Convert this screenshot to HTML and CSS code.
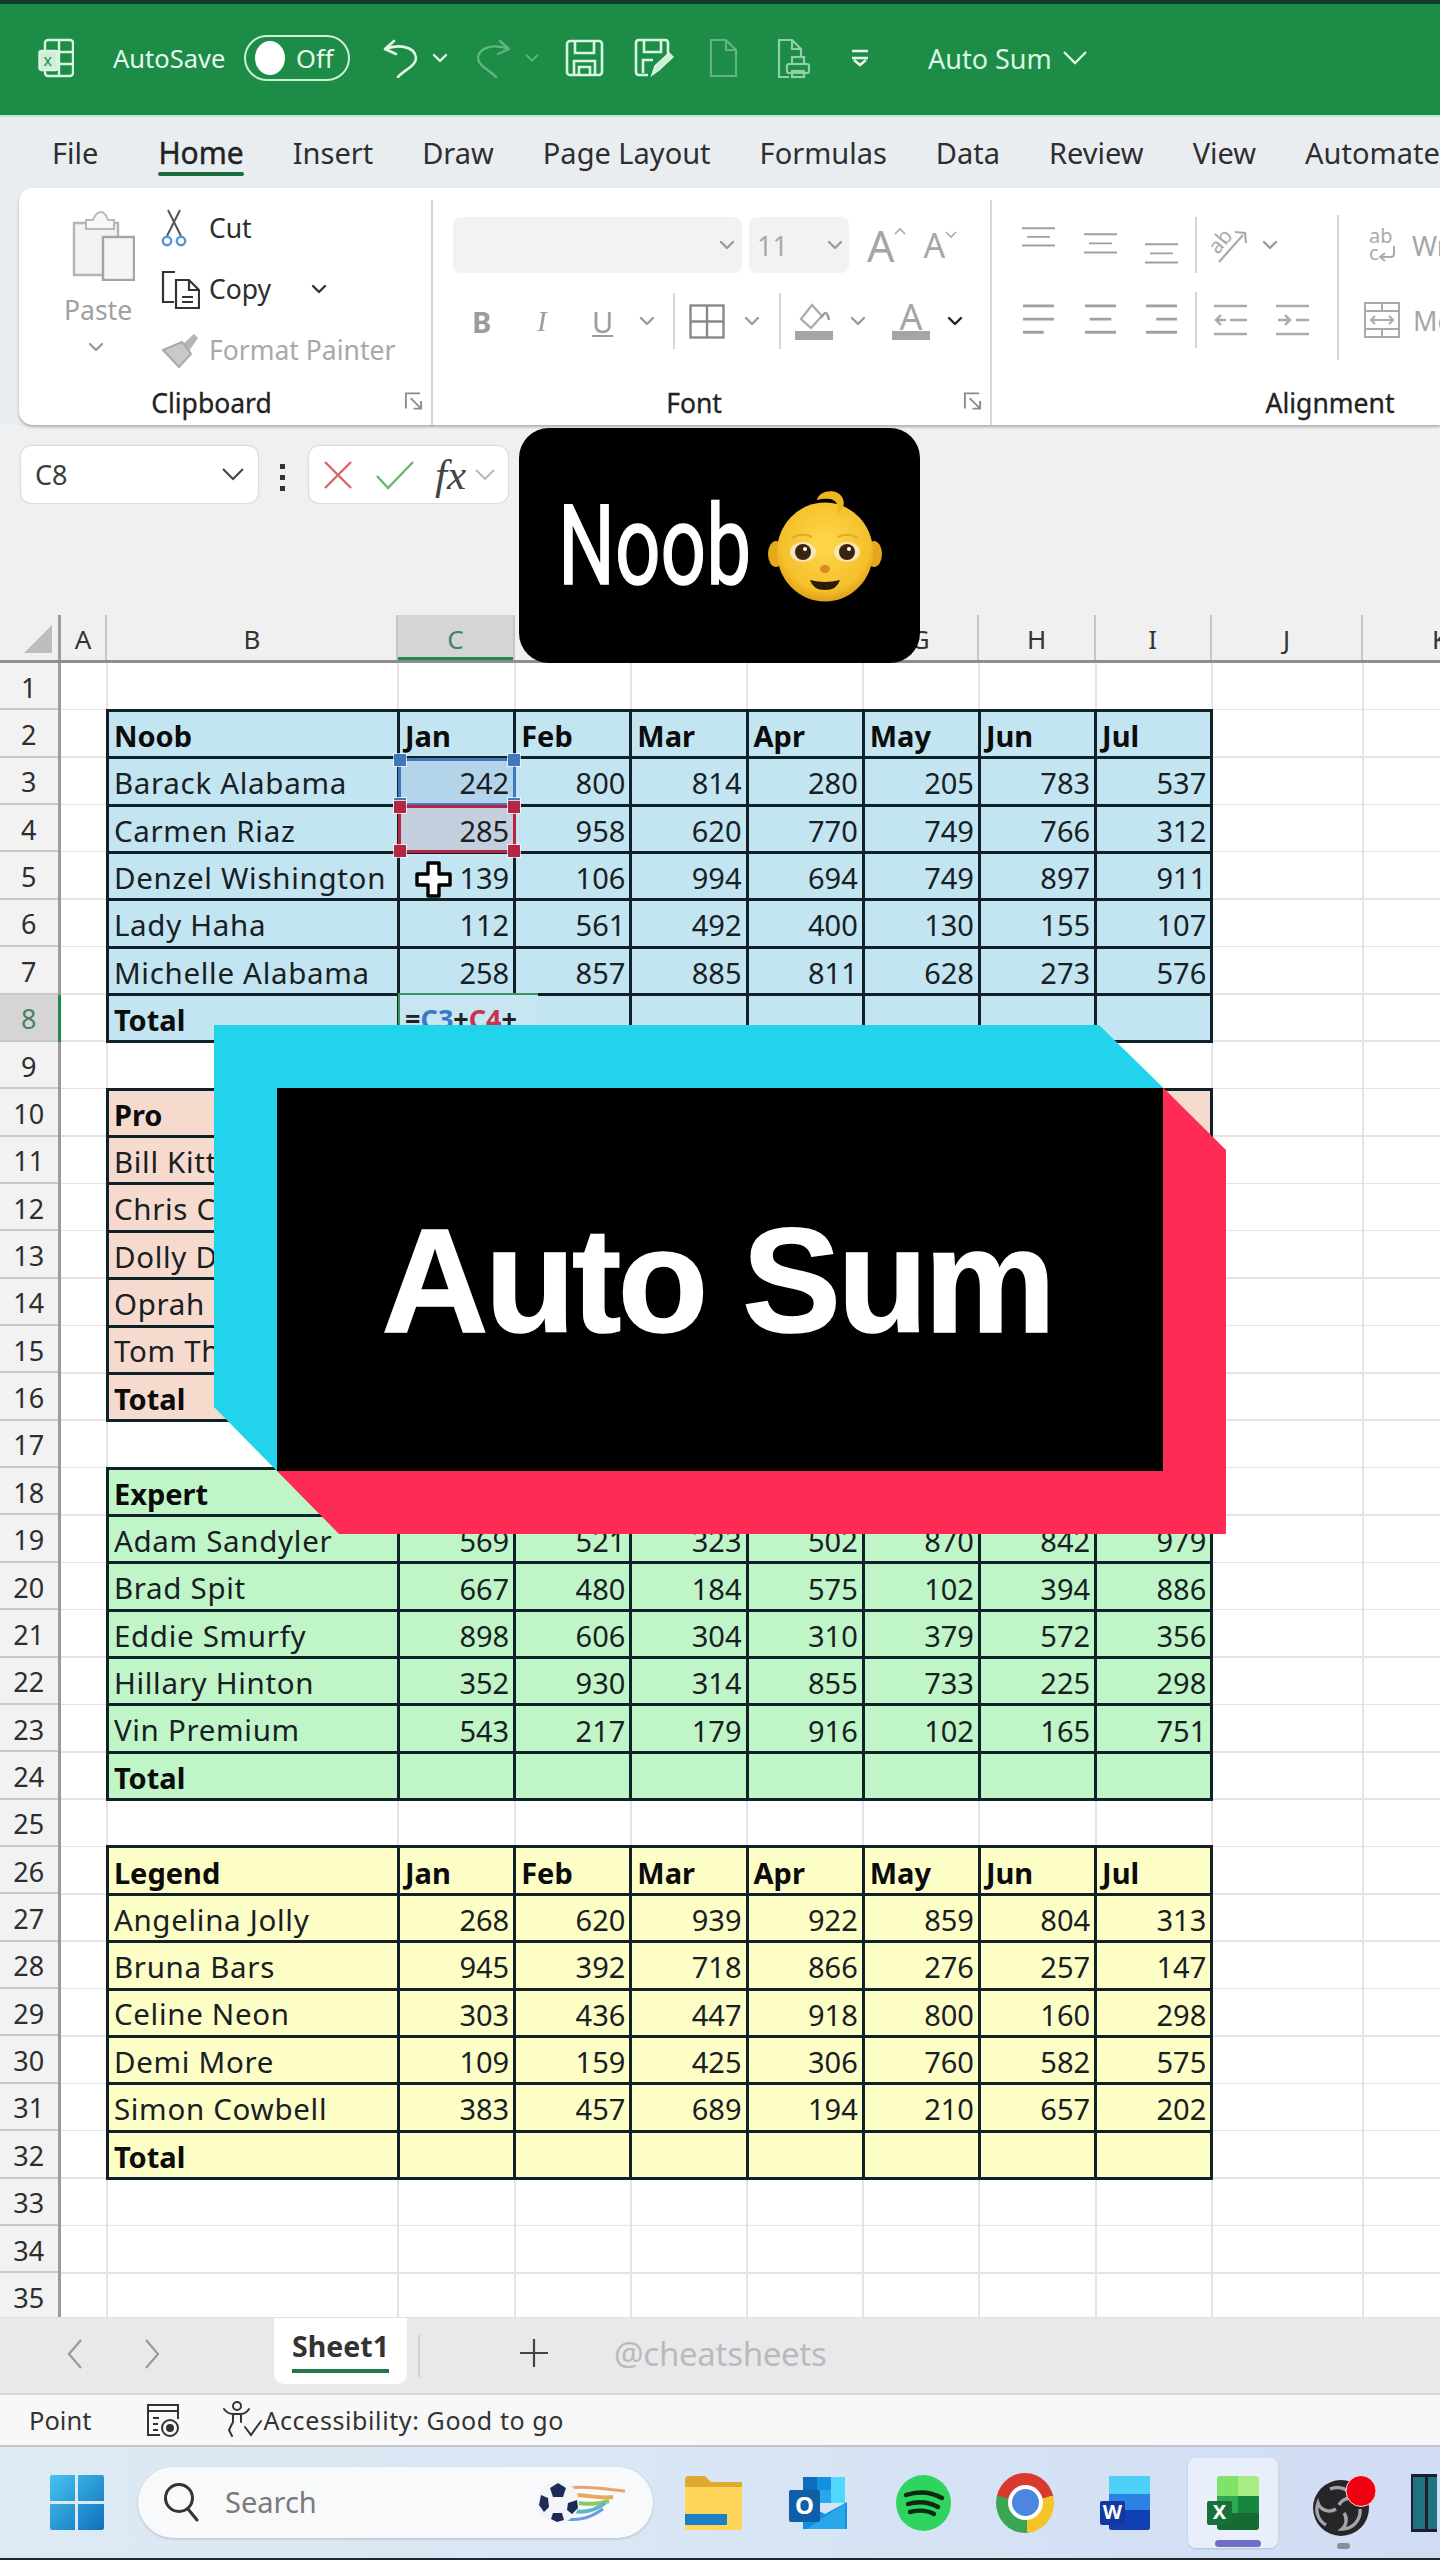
FILE: index.html
```html
<!DOCTYPE html>
<html lang="en">
<head>
<meta charset="utf-8">
<title>Auto Sum - Excel</title>
<link rel="stylesheet" href="styles.css">
</head>
<body>
<svg class="defs" aria-hidden="true">
  <symbol id="chev" viewBox="0 0 16 10"><path d="M2 2 8 8 14 2" fill="none" stroke="currentColor" stroke-width="2.4" stroke-linecap="round" stroke-linejoin="round"/></symbol>
  <symbol id="launch" viewBox="0 0 20 20"><path d="M2 18V2h15M7 7l11 11M18 10v8h-8" fill="none" stroke="currentColor" stroke-width="2"/></symbol>
  <symbol id="aLeft" viewBox="0 0 33 34"><path d="M0 2h33M0 16h33M0 30h22" fill="none" stroke="currentColor" stroke-width="3"/></symbol>
  <symbol id="aCenter" viewBox="0 0 33 34"><path d="M0 2h33M5 16h23M0 30h33" fill="none" stroke="currentColor" stroke-width="3"/></symbol>
  <symbol id="aRight" viewBox="0 0 33 34"><path d="M0 2h33M11 16h22M0 30h33" fill="none" stroke="currentColor" stroke-width="3"/></symbol>
</svg>

<div class="app">
  <header class="titlebar">
    <svg class="ti-xl" width="36" height="40" viewBox="0 0 36 40" fill="none" stroke="#d8f6e0" stroke-width="2.4"><rect x="7" y="2" width="28" height="36" rx="3"/><path d="M7 14h28M7 26h28M21 2v36"/><rect x="1.5" y="13" width="18" height="19" rx="2" fill="#cdeed7"/><text x="5.5" y="28" class="svg-x">x</text></svg>
    <span class="ti-auto">AutoSave</span>
    <span class="toggle"><span class="knob"></span><span>Off</span></span>
    <svg class="ti-undo" width="35" height="39" viewBox="0 0 35 39" fill="none" stroke="#e4f7ea" stroke-width="2.6" stroke-linecap="round" stroke-linejoin="round"><path d="M11 2 2 10l11 5M2 10c13-5 30-3 31 9 0 8-12 12-18 19"/></svg>
    <svg class="ti-c1 pale" width="16" height="10"><use href="#chev"/></svg>
    <svg class="ti-redo" width="35" height="39" viewBox="0 0 35 39" fill="none" stroke="#62b582" stroke-width="2.4" stroke-linecap="round" stroke-linejoin="round"><path d="M24 2l9 8-11 5M33 10C20 5 3 7 2 19c0 8 12 12 18 19"/></svg>
    <svg class="ti-c2 dim" width="14" height="10"><use href="#chev"/></svg>
    <svg class="ti-save" width="39" height="38" viewBox="0 0 39 38" fill="none" stroke="#d8f6e0" stroke-width="2.6"><rect x="2" y="2" width="35" height="34" rx="3"/><path d="M10 2v12h19V2M9 36V22h21v14M14 36v-8h11v8"/></svg>
    <svg class="ti-sas" width="40" height="40" viewBox="0 0 40 40" fill="none" stroke="#d8f6e0" stroke-width="2.6"><path d="M14 37H5q-3 0-3-3V5q0-3 3-3h26q3 0 3 3v11"/><path d="M10 2v12h17V2M9 35V22h10"/><path d="M18 37l3-9 14-13 4 4-14 13z" fill="#cdeed7" stroke-width="1.5"/></svg>
    <svg class="ti-new" width="29" height="40" viewBox="0 0 29 40" fill="none" stroke="#62b582" stroke-width="2.2"><path d="M2 2h15l10 10v26H2zM17 2v10h10"/></svg>
    <svg class="ti-prn" width="34" height="41" viewBox="0 0 34 41" fill="none" stroke="#8fd0a6" stroke-width="2.2"><path d="M12 39H2V2h13l9 9v8M15 2v9h9"/><rect x="10" y="26" width="22" height="9" rx="2"/><rect x="15" y="19" width="12" height="7"/><rect x="15" y="33" width="12" height="6"/></svg>
    <svg class="ti-cust" width="20" height="18" viewBox="0 0 20 18" fill="none" stroke="#e4f7ea" stroke-width="2.6"><path d="M2 2h16M2 9h16M4 11l6 5 6-5"/></svg>
    <span class="ti-name">Auto Sum</span>
    <svg class="ti-c3" width="24" height="14" viewBox="0 0 24 14" fill="none" stroke="#d9f7e2" stroke-width="2.400"><path d="M1 1l11 11L23 1"/></svg>
  </header>

  <nav class="tabs">
    <span>File</span><span class="on">Home</span><span>Insert</span><span>Draw</span><span>Page Layout</span><span>Formulas</span><span>Data</span><span>Review</span><span>View</span><span>Automate</span>
  </nav>

  <div class="ribbon-wrap">
  <section class="ribbon">
    <div class="grp g-clip">
      <div class="grp-body clip-body">
        <div class="paste">
          <svg width="64" height="71" viewBox="0 0 64 71"><path d="M3 13h44v52H3z" fill="#f2f2f3" stroke="#b4b4b4" stroke-width="2.4"/><path d="M15 19v-9h7q3-8 8-8 4 0 7 8h6v9z" fill="#f8f8f8" stroke="#b8b8b8" stroke-width="2"/><rect x="32" y="27" width="31" height="43" fill="#f5f5f6" stroke="#a4a4a4" stroke-width="2.4"/></svg>
          <span class="paste-t">Paste</span>
          <svg class="gray" width="16" height="10"><use href="#chev"/></svg>
        </div>
        <ul class="clipcmds">
          <li><span class="ci"><svg width="26" height="38" viewBox="0 0 26 38" fill="none"><path d="M7 1l13 26M19 1L6 27" stroke="#555" stroke-width="2"/><circle cx="6" cy="32" r="4.2" stroke="#4f96d6" stroke-width="2.4"/><circle cx="20" cy="32" r="4.2" stroke="#4f96d6" stroke-width="2.4"/></svg></span>Cut</li>
          <li><span class="ci"><svg width="39" height="39" viewBox="0 0 39 39" fill="none" stroke="#333" stroke-width="2.2"><path d="M14 2H2v30h11"/><path d="M15 10h13l10 10v18H15zM28 10v10h10M21 27h11M21 32h11"/></svg></span>Copy<svg class="copy-c" width="16" height="10"><use href="#chev"/></svg></li>
          <li class="dis"><span class="ci"><svg width="38" height="36" viewBox="0 0 38 36"><path d="M21 13 33 2l4 4-9 13z" fill="#b5b5b5"/><path d="M2 18l19-8 9 12-12 13z" fill="#c9c9c9" stroke="#aaa" stroke-width="2"/></svg></span>Format Painter</li>
        </ul>
      </div>
      <div class="grp-foot"><span>Clipboard</span><svg width="19" height="20"><use href="#launch"/></svg></div>
    </div>

    <div class="grp g-font">
      <div class="grp-body font-body">
        <div class="font-row1">
          <span class="dd dd-font"><svg class="gray" width="16" height="10"><use href="#chev"/></svg></span>
          <span class="dd dd-size"><span>11</span><svg class="gray" width="16" height="10"><use href="#chev"/></svg></span>
          <span class="grow-a">A<svg width="12" height="8" viewBox="0 0 12 8"><path d="M1 7l5-5 5 5" fill="none" stroke="#aaa" stroke-width="1.6"/></svg></span>
          <span class="shrink-a">A<svg width="12" height="8" viewBox="0 0 12 8"><path d="M1 1l5 5 5-5" fill="none" stroke="#aaa" stroke-width="1.6"/></svg></span>
        </div>
        <div class="font-row2">
          <b class="f-b">B</b><i class="f-i">I</i><u class="f-u">U</u>
          <svg class="gray f-c1" width="16" height="10"><use href="#chev"/></svg>
          <span class="vsep f-s1"></span>
          <svg class="f-bd" width="36" height="35" viewBox="0 0 36 35" fill="none" stroke="#888" stroke-width="2.4"><rect x="1.5" y="1.5" width="33" height="32"/><path d="M18 1v33M1 17.500h34"/></svg>
          <svg class="gray f-c2" width="16" height="10"><use href="#chev"/></svg>
          <span class="vsep f-s2"></span>
          <svg class="f-fill" width="38" height="38" viewBox="0 0 38 38"><path d="M17 3l-11 14 10 9 11-12z" fill="none" stroke="#aaa" stroke-width="2.2"/><path d="M26 16c4-7 6-7 8 2" fill="none" stroke="#999" stroke-width="2.4"/><rect y="29" width="38" height="9" fill="#a5a5a8"/></svg>
          <svg class="gray f-c3" width="16" height="10"><use href="#chev"/></svg>
          <span class="f-color">A</span>
          <svg class="f-c4" width="16" height="10"><use href="#chev"/></svg>
        </div>
      </div>
      <div class="grp-foot"><span>Font</span><svg width="19" height="20"><use href="#launch"/></svg></div>
    </div>

    <div class="grp g-align">
      <div class="grp-body align-body">
        <div class="align-col">
          <div class="al-row">
            <svg class="al al-top" width="33" height="21" viewBox="0 0 33 34" preserveAspectRatio="none"><use href="#aCenter"/></svg>
            <svg class="al al-mid" width="33" height="22" viewBox="0 0 33 34" preserveAspectRatio="none"><use href="#aCenter"/></svg>
            <svg class="al al-bot" width="33" height="22" viewBox="0 0 33 34" preserveAspectRatio="none"><use href="#aCenter"/></svg>
            <span class="vsep al-s"></span>
            <svg class="al-or" width="40" height="36" viewBox="0 0 40 36" fill="none" stroke="#aaa" stroke-width="2.2"><text x="0" y="22" class="svg-ab" transform="rotate(-50 10 18)">ab</text><path d="M8 35 32 8M24 5l10 1 1 10"/></svg>
            <svg class="gray al-c" width="16" height="10"><use href="#chev"/></svg>
          </div>
          <div class="al-row al-row2">
            <svg class="al" width="33" height="32"><use href="#aLeft"/></svg>
            <svg class="al" width="33" height="32"><use href="#aCenter"/></svg>
            <svg class="al" width="33" height="32"><use href="#aRight"/></svg>
            <span class="vsep al-s2"></span>
            <svg class="al al-in1" width="33" height="32" viewBox="0 0 33 32" fill="none" stroke="#aaa" stroke-width="3"><path d="M0 2h33M16 16h17M0 30h33M12 16H2M7 11l-5 5 5 5" stroke-width="2.4"/></svg>
            <svg class="al al-in2" width="33" height="32" viewBox="0 0 33 32" fill="none" stroke="#aaa" stroke-width="3"><path d="M0 2h33M20 16h13M0 30h33M2 16h12M9 11l5 5-5 5" stroke-width="2.4"/></svg>
          </div>
        </div>
        <span class="vsep al-big"></span>
        <div class="wrapcol">
          <div class="wr-row"><svg width="30" height="35" viewBox="0 0 30 35"><text x="1" y="15" class="svg-wr">ab</text><text x="1" y="32" class="svg-wr">c</text><path d="M26 18v8q0 3-3 3H13M17 25l-5 4 5 4" fill="none" stroke="#aaa" stroke-width="2"/></svg><span>Wrap Text</span></div>
          <div class="wr-row wr-row2"><svg width="36" height="36" viewBox="0 0 36 36" fill="none" stroke="#aaa" stroke-width="2"><rect x="1" y="1" width="34" height="34"/><path d="M1 9h34M1 27h34M18 1v8M18 27v8M7 18h22M11 14l-4 4 4 4M25 14l4 4-4 4"/></svg><span>Merge &amp; Center</span></div>
        </div>
      </div>
      <div class="grp-foot"><span>Alignment</span></div>
    </div>
  </section>
  </div>

  <section class="fbar">
    <div class="namebox"><span>C8</span><svg width="22" height="13" viewBox="0 0 22 13" fill="none" stroke="#444" stroke-width="2"><path d="M1 1l10 10L21 1"/></svg></div>
    <span class="dots"><i></i><i></i><i></i></span>
    <div class="fxbox">
      <svg width="30" height="30" viewBox="0 0 30 30"><path d="M2 2l26 26M28 2 2 28" stroke="#d9666c" stroke-width="2.4" fill="none"/></svg>
      <svg class="fx-ok" width="40" height="30" viewBox="0 0 40 30"><path d="M2 16l11 12L38 2" stroke="#67b870" stroke-width="2.4" fill="none"/></svg>
      <span class="fx">fx</span>
      <svg class="fx-c" width="20" height="12" viewBox="0 0 20 12" fill="none" stroke="#b5b5b5" stroke-width="1.800"><path d="M1 1l9 9 9-9"/></svg>
    </div>
  </section>

  <div class="ruler">
    <span class="r-corner"><svg width="28" height="28"><path d="M28 0v28H0z" fill="#bdbdbd"/></svg></span>
    <span class="r-a">A</span><span class="r-b">B</span><span class="r-c sel">C</span><span class="r-c">D</span><span class="r-c">E</span><span class="r-c">F</span><span class="r-c">G</span><span class="r-c">H</span><span class="r-c">I</span><span class="r-j">J</span><span class="r-k">K</span>
  </div>

  <main class="sheet">
    <div class="rowheads">
      <span>1</span><span>2</span><span>3</span><span>4</span><span>5</span><span>6</span><span>7</span><span class="sel">8</span><span>9</span><span>10</span><span>11</span><span>12</span><span>13</span><span>14</span><span>15</span><span>16</span><span>17</span><span>18</span><span>19</span><span>20</span><span>21</span><span>22</span><span>23</span><span>24</span><span>25</span><span>26</span><span>27</span><span>28</span><span>29</span><span>30</span><span>31</span><span>32</span><span>33</span><span>34</span><span>35</span>
    </div>
    <div class="cells">
      <div class="vlines" aria-hidden="true"><i class="v-a"></i><i class="v-b"></i><i class="v-c"></i><i class="v-c"></i><i class="v-c"></i><i class="v-c"></i><i class="v-c"></i><i class="v-c"></i><i class="v-c"></i><i class="v-j"></i></div>

      <div class="tbl noob">
        <b>Noob</b><b>Jan</b><b>Feb</b><b>Mar</b><b>Apr</b><b>May</b><b>Jun</b><b>Jul</b>
        <span class="n">Barack Alabama</span><span class="c3">242</span><span>800</span><span>814</span><span>280</span><span>205</span><span>783</span><span>537</span>
        <span class="n">Carmen Riaz</span><span class="c4">285</span><span>958</span><span>620</span><span>770</span><span>749</span><span>766</span><span>312</span>
        <span class="n">Denzel Wishington</span><span>139</span><span>106</span><span>994</span><span>694</span><span>749</span><span>897</span><span>911</span>
        <span class="n">Lady Haha</span><span>112</span><span>561</span><span>492</span><span>400</span><span>130</span><span>155</span><span>107</span>
        <span class="n">Michelle Alabama</span><span>258</span><span>857</span><span>885</span><span>811</span><span>628</span><span>273</span><span>576</span>
        <b>Total</b><span></span><span></span><span></span><span></span><span></span><span></span><span></span>
      </div>

      <div class="tbl pro">
        <b>Pro</b><span></span><span></span><span></span><span></span><span></span><span></span><span></span>
        <span class="n">Bill Kitt</span><span></span><span></span><span></span><span></span><span></span><span></span><span></span>
        <span class="n">Chris C</span><span></span><span></span><span></span><span></span><span></span><span></span><span></span>
        <span class="n">Dolly D</span><span></span><span></span><span></span><span></span><span></span><span></span><span></span>
        <span class="n">Oprah</span><span></span><span></span><span></span><span></span><span></span><span></span><span></span>
        <span class="n">Tom Th</span><span></span><span></span><span></span><span></span><span></span><span></span><span></span>
        <b>Total</b><span></span><span></span><span></span><span></span><span></span><span></span><span></span>
      </div>

      <div class="tbl expert">
        <b>Expert</b><span></span><span></span><span></span><span></span><span></span><span></span><span></span>
        <span class="n">Adam Sandyler</span><span>569</span><span>521</span><span>323</span><span>502</span><span>870</span><span>842</span><span>979</span>
        <span class="n">Brad Spit</span><span>667</span><span>480</span><span>184</span><span>575</span><span>102</span><span>394</span><span>886</span>
        <span class="n">Eddie Smurfy</span><span>898</span><span>606</span><span>304</span><span>310</span><span>379</span><span>572</span><span>356</span>
        <span class="n">Hillary Hinton</span><span>352</span><span>930</span><span>314</span><span>855</span><span>733</span><span>225</span><span>298</span>
        <span class="n">Vin Premium</span><span>543</span><span>217</span><span>179</span><span>916</span><span>102</span><span>165</span><span>751</span>
        <b>Total</b><span></span><span></span><span></span><span></span><span></span><span></span><span></span>
      </div>

      <div class="tbl legend">
        <b>Legend</b><b>Jan</b><b>Feb</b><b>Mar</b><b>Apr</b><b>May</b><b>Jun</b><b>Jul</b>
        <span class="n">Angelina Jolly</span><span>268</span><span>620</span><span>939</span><span>922</span><span>859</span><span>804</span><span>313</span>
        <span class="n">Bruna Bars</span><span>945</span><span>392</span><span>718</span><span>866</span><span>276</span><span>257</span><span>147</span>
        <span class="n">Celine Neon</span><span>303</span><span>436</span><span>447</span><span>918</span><span>800</span><span>160</span><span>298</span>
        <span class="n">Demi More</span><span>109</span><span>159</span><span>425</span><span>306</span><span>760</span><span>582</span><span>575</span>
        <span class="n">Simon Cowbell</span><span>383</span><span>457</span><span>689</span><span>194</span><span>210</span><span>657</span><span>202</span>
        <b>Total</b><span></span><span></span><span></span><span></span><span></span><span></span><span></span>
      </div>

      <div class="rng rng-blue"><i class="h tl"></i><i class="h tr"></i><i class="h bl"></i><i class="h br"></i></div>
      <div class="rng rng-red"><i class="h tl"></i><i class="h tr"></i><i class="h bl"></i><i class="h br"></i></div>
      <div class="editcell">=<em class="blue">C3</em>+<em class="red">C4</em>+</div>
      <svg class="cursor" width="37" height="37" viewBox="0 0 37 37"><path d="M13 2h11v11h11v11H24v11H13V24H2V13h11z" fill="#fff" stroke="#000" stroke-width="3.400" stroke-linejoin="round"/></svg>
    </div>
  </main>

  <div class="sheettabs">
    <svg class="st-l" width="16" height="32" viewBox="0 0 16 32" fill="none" stroke="#9a9a9a" stroke-width="2.2"><path d="M14 2 2 16l12 14"/></svg>
    <svg class="st-r" width="16" height="32" viewBox="0 0 16 32" fill="none" stroke="#9a9a9a" stroke-width="2.2"><path d="M2 2l12 14L2 30"/></svg>
    <span class="st-tab"><span>Sheet1</span></span>
    <span class="vsep st-sep"></span>
    <svg class="st-plus" width="28" height="28" viewBox="0 0 28 28" stroke="#444" stroke-width="2.2"><path d="M14 0v28M0 14h28"/></svg>
    <span class="st-handle">@cheatsheets</span>
  </div>

  <div class="status">
    <span class="s-point">Point</span>
    <svg class="s-mac" width="34" height="34" viewBox="0 0 34 34" fill="none" stroke="#333" stroke-width="2"><path d="M14 32H2V2h30v14M2 8h30M7 15h6M7 21h5M7 27h5"/><circle cx="24" cy="25" r="8"/><circle cx="24" cy="25" r="3" fill="#333"/></svg>
    <svg class="s-acc" width="41" height="40" viewBox="0 0 41 40" fill="none" stroke="#333" stroke-width="2" stroke-linecap="round"><circle cx="15" cy="6" r="4"/><path d="M2 9c3 4 7 5 9 5h8c3 0 6-2 8-5M11 14v8l-4 8 3 6M19 14v8M23 27l6 8 10-14"/></svg>
    <span class="s-acct">Accessibility: Good to go</span>
  </div>

  <footer class="taskbar">
    <svg class="t-win" width="54" height="55" viewBox="0 0 54 55"><defs><linearGradient id="wg" x1="0" y1="0" x2="1" y2="1"><stop offset="0" stop-color="#46c3ef"/><stop offset="1" stop-color="#1070bc"/></linearGradient></defs><path d="M0 2q0-2 2-2h23v26H0zM28 0h24q2 0 2 2v24H28zM0 29h25v26H2q-2 0-2-2zM28 29h26v24q0 2-2 2H28z" fill="url(#wg)"/></svg>
    <div class="t-search">
      <svg width="36" height="40" viewBox="0 0 36 40" fill="none" stroke="#333" stroke-width="3"><circle cx="16" cy="16" r="13.500"/><path d="M25 27l9 11" stroke-linecap="round"/></svg>
      <span>Search</span>
      <svg class="t-ball" width="92" height="58" viewBox="0 0 92 58" fill="none"><path d="M36 15c18-3 36 2 54 3" stroke="#f0a070" stroke-width="3"/><path d="M38 22c16 0 26 4 40 2" stroke="#e8a85a" stroke-width="4"/><path d="M40 30c14 1 20 2 34 -2" stroke="#8cc66a" stroke-width="4"/><path d="M38 38c12 2 22 0 32-8" stroke="#58b7c9" stroke-width="4"/><path d="M32 46c14 2 24-2 36-10" stroke="#6a9be0" stroke-width="3"/><circle cx="23" cy="29" r="21" fill="#f2f4f8"/><path d="M23 10l8 5-3 9h-10l-3-9z M6 22l7 3 1 9-5 5-5-7z M33 30l9-3 1 8-6 6-5-4z M18 40h9l2 7-7 2-6-3z" fill="#1f2b57"/></svg>
    </div>
    <svg class="t-folder" width="57" height="54" viewBox="0 0 57 54"><path d="M0 4q0-4 4-4h16l6 6h31v44H0z" fill="#dfa92e"/><path d="M0 11h57v43H0z" fill="#ffd65a"/><path d="M0 38h42v11H0z" fill="#1f7fc4"/></svg>
    <svg class="t-out" width="58" height="52" viewBox="0 0 58 52"><path d="M14 0h42v26H14z" fill="#0f6cbd"/><path d="M28 0h14v13H28z" fill="#1490df"/><path d="M42 0h14v13H42z" fill="#50d9ff"/><path d="M14 13h14v13H14z" fill="#0f6cbd"/><path d="M28 13h14v13H28z" fill="#28a8ea"/><path d="M42 13h14v13H42z" fill="#50d9ff"/><path d="M14 26l22 11 22-12v27H14z" fill="#1490df"/><path d="M18 52l38-26v26z" fill="#28a8ea"/><rect y="13" width="31" height="32" rx="2" fill="#0f5fa8"/><text x="15.500" y="37" class="svg-o">O</text></svg>
    <svg class="t-spot" width="55" height="56" viewBox="0 0 55 56"><ellipse cx="27.500" cy="28" rx="27.500" ry="28" fill="#2ed45e"/><path d="M10 20c12-4 25-3 36 3M12 29c10-3 21-2 30 3M14 37c8-2 17-2 24 2" fill="none" stroke="#0c2a14" stroke-width="4.400" stroke-linecap="round"/></svg>
    <span class="t-chrome"><span class="t-chrome-c"></span></span>
    <svg class="t-word" width="50" height="54" viewBox="0 0 50 54"><rect x="9" width="41" height="54" rx="3" fill="#1d5fc8"/><path d="M12 0h35q3 0 3 3v15H9V3q0-3 3-3z" fill="#4fd0f6"/><path d="M9 18h41v16H9z" fill="#2b82e4"/><path d="M9 34h41v17q0 3-3 3H12q-3 0-3-3z" fill="#1140b5"/><rect y="25" width="25" height="24" rx="2" fill="#123a9e"/><text x="12.500" y="43" class="svg-w">W</text></svg>
    <div class="t-xlbox">
      <svg width="52" height="54" viewBox="0 0 52 54"><path d="M13 0h18v20H10V3q0-3 3-3z" fill="#7fe36a"/><path d="M31 0h18q3 0 3 3v17H31z" fill="#a8ed83"/><path d="M10 20h21v17H10z" fill="#2ea84f"/><path d="M31 20h21v17H31z" fill="#17863f"/><path d="M10 37h42v14q0 3-3 3H13q-3 0-3-3z" fill="#166b34"/><rect y="25" width="25" height="24" rx="2" fill="#17703a"/><text x="12.500" y="43" class="svg-w">X</text></svg>
      <i class="t-ind"></i>
    </div>
    <div class="t-obs">
      <svg width="72" height="62" viewBox="0 0 72 62" fill="none"><circle cx="31" cy="33" r="28" fill="#262629"/><path d="M20 14a18 18 0 0 1 24 10 12 12 0 0 0-15 6M50 34a18 18 0 0 1-18 20 12 12 0 0 0 2-16M16 50a18 18 0 0 1-8-22 12 12 0 0 0 18 6" stroke="#a4a4a8" stroke-width="3.400"/><ellipse cx="51" cy="16" rx="15" ry="15.500" fill="#f00010" stroke="#ffd7d7" stroke-width="1"/></svg>
      <i class="t-ind2"></i>
    </div>
    <svg class="t-last" width="26" height="58" viewBox="0 0 26 58"><rect width="26" height="58" fill="#1d1d2b"/><rect x="2" y="3" width="12" height="52" fill="#1f7380"/><rect x="17" y="3" width="9" height="52" fill="#1f7380"/></svg>
  </footer>
</div>

<div class="badge">
  <span class="badge-t">Noob</span>
  <svg class="baby" width="114" height="114" viewBox="0 0 114 114"><defs><radialGradient id="bf" cx=".5" cy=".42" r=".62"><stop offset="0" stop-color="#ffd84e"/><stop offset=".75" stop-color="#f5c02c"/><stop offset="1" stop-color="#d99512"/></radialGradient></defs><ellipse cx="8" cy="66" rx="8" ry="13" fill="#e5a81d"/><ellipse cx="106" cy="66" rx="8" ry="13" fill="#e5a81d"/><ellipse cx="57" cy="64" rx="48" ry="49.500" fill="url(#bf)"/><path d="M49 12c2-10 20-12 25-3 4 7 1 14-6 18 3-7 2-13-3-15-5-2-11-1-16 0z" fill="#f0b522"/><ellipse cx="35" cy="64" rx="13" ry="10" fill="#f7e7b4"/><ellipse cx="79" cy="64" rx="13" ry="10" fill="#f7e7b4"/><circle cx="35" cy="64" r="8" fill="#3a2410"/><circle cx="79" cy="64" r="8" fill="#3a2410"/><circle cx="37" cy="61" r="2" fill="#fff"/><circle cx="81" cy="61" r="2" fill="#fff"/><path d="M24 50q10-6 20-1M70 49q10-5 20 1" stroke="#e3a92a" stroke-width="2" fill="none"/><ellipse cx="57" cy="81" rx="5" ry="4" fill="#d9882a"/><path d="M42 92q15 4 30 0-3 10-15 10t-15-10z" fill="#2a1a0c"/></svg>
</div>

<div class="banner">
  <div class="b-cyan"></div>
  <div class="b-red"></div>
  <div class="b-black"><span>Auto Sum</span></div>
</div>
</body>
</html>
```

FILE: styles.css
```css
* { box-sizing: border-box; }
html, body { margin: 0; padding: 0; }
body { width: 1440px; height: 2560px; overflow: hidden; position: relative; background: #fff; font-family: "Noto Sans", "Liberation Sans", sans-serif; color: #222; }
.defs { position: absolute; width: 0; height: 0; }
.app { display: flex; flex-direction: column; width: 1440px; height: 2560px; }
svg { display: block; flex: none; }
.gray { color: #9b9b9b; }
.pale { color: #e4f7ea; }
.dim { color: #62b582; }
.vsep { display: block; width: 2px; background: #d6d6d6; flex: none; }

/* title bar */
.titlebar { height: 117px; flex: none; background: #1c8c47; border-top: 4px solid #17392a; border-bottom: 2px solid #b8e8c8; display: flex; align-items: center; padding-left: 38px; padding-bottom: 3px; color: #e8f8ee; font-size: 25.500px; }
.ti-auto { margin-left: 39px; width: 113px; white-space: nowrap; }
.toggle { margin-left: 18px; width: 106px; height: 46px; border: 2.500px solid #cdeed7; border-radius: 23px; display: flex; align-items: center; padding-left: 9px; gap: 11px; font-size: 25.500px; }
.knob { width: 30px; height: 34px; border-radius: 50%; background: #fff; flex: none; }
.ti-undo { margin-left: 33px; }
.ti-c1 { margin-left: 14px; }
.ti-redo { margin-left: 28px; }
.ti-c2 { margin-left: 14px; }
.ti-save { margin-left: 26px; }
.ti-sas { margin-left: 30px; }
.ti-new { margin-left: 35px; }
.ti-prn { margin-left: 39px; }
.ti-cust { margin-left: 39px; }
.ti-name { margin-left: 58px; font-size: 27px; white-space: nowrap; color: #d9f7e2; }
.ti-c3 { margin-left: 11px; }
.svg-x { font: 16px "Noto Sans", sans-serif; fill: #1c8c47; stroke: none; }

/* tabs */
.tabs { height: 71px; flex: none; background: #e9edf0; display: flex; align-items: center; gap: 49px; padding: 0 0 1px 52px; font-size: 29px; color: #2e2e30; white-space: nowrap; overflow: hidden; }
.tabs .on { position: relative; margin-left: 11px; font-size: 30px; color: #222; -webkit-text-stroke: .4px #222; }
.tabs .on::after { content: ""; position: absolute; left: 0; right: 0; bottom: -3px; height: 4px; border-radius: 2px; background: #1a6b3c; }

/* ribbon */
.ribbon-wrap { height: 237px; flex: none; padding-left: 19px; background: #e9edf0; position: relative; z-index: 1; }
.ribbon { height: 237px; display: flex; background: #fff; border-radius: 14px 0 0 14px; box-shadow: 0 2px 3px rgba(0,0,0,.28); overflow: hidden; font-size: 26.500px; }
.grp { display: flex; flex-direction: column; flex: none; position: relative; }
.grp-body { height: 192px; }
.grp-foot { height: 45px; display: flex; align-items: center; font-size: 26.500px; color: #222; -webkit-text-stroke: .3px #222; }
.grp-foot span { flex: 1; text-align: center; }
.grp-foot svg { margin-right: 8px; margin-top: -4px; color: #8c8c8c; }
.g-clip { width: 414px; border-right: 2px solid #d8d8d8; margin: 12px 0 12px; height: 225px; }
.g-clip .grp-body { height: 180px; }
.clip-body { display: flex; }
.paste { width: 120px; display: flex; flex-direction: column; align-items: flex-start; padding: 10px 0 0 52px; color: #a0a0a0; }
.paste-t { margin-top: 11px; font-size: 26.500px; margin-left: -7px; line-height: 36px; }
.paste .gray { margin-left: 17px; margin-top: 14px; }
.clipcmds { list-style: none; margin: -2px 0 0; padding: 0 0 0 22px; display: flex; flex-direction: column; }
.clipcmds li { height: 61.500px; display: flex; align-items: center; white-space: nowrap; color: #2c2c2c; }
.clipcmds .ci { width: 48px; display: flex; justify-content: flex-start; }
.clipcmds .dis { color: #a8a8a8; }
.copy-c { margin-left: 40px; color: #333; }
.g-font { width: 559px; margin: 12px 0; height: 225px; border-right: 2px solid #d8d8d8; }
.g-font .grp-body { height: 180px; padding: 17px 0 0 20px; display: flex; flex-direction: column; gap: 29px; }
.g-font .grp-foot span { padding-right: 8px; }
.font-row1 { display: flex; align-items: center; height: 56px; }
.dd { display: flex; align-items: center; justify-content: flex-end; background: #f2f2f3; border-radius: 8px; height: 56px; padding-right: 7px; color: #a8a8a8; }
.dd-font { width: 289px; }
.dd-size { width: 100px; margin-left: 7px; justify-content: space-between; padding: 0 6px 0 8px; font-size: 27px; }
.grow-a, .shrink-a { display: flex; align-items: flex-start; color: #a6a6a6; line-height: 1; }
.grow-a { font-size: 43px; margin-left: 18px; }
.shrink-a { font-size: 34px; margin-left: 17px; }
.grow-a svg, .shrink-a svg { margin-top: 3px; }
.font-row2 { display: flex; align-items: center; height: 38px; padding-left: 19px; color: #9c9c9c; font-size: 29px; }
.f-b { font-weight: 700; width: 18px; }
.f-i { margin-left: 47px; width: 13px; font-family: "Liberation Serif", serif; }
.f-u { margin-left: 42px; width: 20px; }
.f-c1 { margin-left: 27px; }
.f-s1 { margin-left: 18px; height: 56px; }
.f-bd { margin-left: 14px; }
.f-c2 { margin-left: 19px; }
.f-s2 { margin-left: 19px; height: 56px; }
.f-fill { margin-left: 14px; }
.f-c3 { margin-left: 17px; }
.f-color { margin-left: 26px; width: 38px; height: 38px; font-size: 36px; line-height: 29px; text-align: center; color: #a5a5a8; border-bottom: 9px solid #a5a5a8; }
.f-c4 { margin-left: 17px; color: #222; }
.g-align { width: 676px; margin: 12px 0; height: 225px; flex: none; }
.g-align .grp-body { height: 180px; padding: 3px 0 0 30px; display: flex; }
.align-col { width: 315px; display: flex; flex-direction: column; gap: 19px; padding-top: 14px; }
.al-row { display: flex; align-items: flex-start; height: 56px; color: #a0a0a0; }
.al-row2 { height: 56px; align-items: center; }
.al { margin-right: 28.500px; flex: none; }
.al-top { margin-top: 10px; }
.al-mid { margin-top: 16px; }
.al-bot { margin-top: 26px; margin-right: 17px; }
.al-s { height: 56px; }
.al-or { margin: 10px 0 0 14px; }
.svg-ab { font: 21px "Noto Sans", sans-serif; fill: #aaa; stroke: none; }
.al-c { margin: 23px 0 0 11px; }
.al-row2 .al:nth-child(3) { margin-right: 17px; }
.al-s2 { height: 56px; }
.al-in1 { margin-left: 17px; margin-right: 29px; }
.al-in2 { margin-right: 0; }
.al-big { height: 145px; margin-top: 12px; }
.wrapcol { padding-left: 25px; white-space: nowrap; color: #a6a6a6; font-size: 27px; }
.wr-row { display: flex; align-items: center; gap: 14px; height: 56px; margin-top: 14px; }
.wr-row svg { margin-left: 4px; }
.wr-row2 { margin-top: 19px; gap: 13px; }
.wr-row2 svg { margin-left: 0; }
.svg-wr { font: 20px "Noto Sans", sans-serif; fill: #aaa; }

/* formula bar */
.fbar { height: 190px; flex: none; background: #eef0f2; display: flex; padding: 21px 0 0 21px; align-items: flex-start; }
.namebox { width: 237px; height: 57px; background: #fff; border-radius: 10px; box-shadow: 0 0 2px rgba(0,0,0,.3); display: flex; align-items: center; justify-content: space-between; padding: 0 14px; font-size: 27px; color: #3c3c3c; }
.dots { display: flex; flex-direction: column; gap: 6px; margin: 18px 0 0 22px; width: 5px; }
.dots i { display: block; width: 5px; height: 5px; background: #333; }
.fxbox { margin-left: 24px; width: 199px; height: 57px; background: #fff; border-radius: 10px; box-shadow: 0 0 2px rgba(0,0,0,.3); display: flex; align-items: center; padding-left: 14px; }
.fx-ok { margin-left: 22px; }
.fx { margin-left: 20px; width: 37px; font: italic 400 43px "Liberation Serif", serif; color: #444; line-height: 1; }
.fx-c { margin-left: 3px; }

/* column ruler */
.ruler { height: 48px; flex: none; display: flex; background: #f0f0f1; border-bottom: 3px solid #8e8e8e; font-size: 26px; color: #333; overflow: hidden; }
.ruler span { display: flex; align-items: center; justify-content: center; flex: none; border-right: 2px solid #c6c6c6; padding-top: 2px; }
.ruler .r-corner { width: 60.600px; border-right: 3px solid #9c9c9c; align-items: flex-end; justify-content: flex-start; padding: 0 0 7px 24px; background: #eef0f2; }
.r-a { width: 46.800px; }
.r-b { width: 291.100px; }
.r-c { width: 116.200px; }
.r-j { width: 151.300px; }
.r-k { width: 156px; border-right: 0; }
.ruler .sel { background: #d5d5d5; color: #4b8064; box-shadow: inset 0 -3px 0 #1f8a4c; }

/* sheet */
.sheet { height: 1655px; flex: none; display: flex; overflow: hidden; position: relative; }
.rowheads { width: 60.600px; flex: none; background: #f2f2f3; border-right: 3px solid #9c9c9c; font-size: 27px; color: #2e2e2e; }
.rowheads span { display: flex; align-items: center; justify-content: center; height: 47.370px; border-bottom: 2px solid #c9c9c9; padding-top: 3px; }
.rowheads .sel { background: #d5d5d5; color: #4b8064; box-shadow: 3px 0 0 #1f8a4c; }
.cells { flex: 1; position: relative; padding: 45.870px 0 0 45.300px; display: flex; flex-direction: column; gap: 44.370px; background-image: repeating-linear-gradient(to bottom, transparent 0, transparent 45.870px, #e5e3e5 45.870px, #e5e3e5 47.370px); }
.vlines { position: absolute; inset: 0; display: flex; }
.vlines i { display: block; height: 100%; flex: none; border-right: 2px solid #e5e3e5; }
.v-a { width: 47.800px; }
.v-b { width: 291.100px; }
.v-c { width: 116.200px; }
.v-j { width: 151.300px; }

.tbl { position: relative; flex: none; display: grid; width: 1107.500px; grid-template-columns: 291.100px repeat(7, 116.200px); grid-auto-rows: 47.370px; border-left: 3px solid #10212a; border-top: 3px solid #10212a; font-size: 29px; color: #182024; }
.tbl > * { display: flex; align-items: center; justify-content: flex-end; padding: 3px 4px 0 5px; border-right: 3px solid #10212a; border-bottom: 3px solid #10212a; overflow: hidden; white-space: nowrap; line-height: 1; font-weight: 400; }
.tbl > .n { justify-content: flex-start; font-size: 29.500px; letter-spacing: .7px; }
.tbl > b { justify-content: flex-start; font-weight: 700; color: #0c0c0c; }
.noob { background: #c2e5f1; }
.pro { background: #f6dacd; }
.expert { background: #c0f5c8; }
.legend { background: #fdfdc6; }
.tbl > .c3 { background: #b4d4ea; }
.tbl > .c4 { background: #c4cfdd; }

.rng { position: absolute; left: 337px; width: 118px; height: 48px; border: 3.500px solid; }
.rng-blue { top: 94.500px; color: #3f78bd; }
.rng-red { top: 141.900px; color: #b52642; }
.rng .h { position: absolute; width: 12px; height: 12px; background: currentColor; outline: 1.500px solid rgba(255,255,255,.7); }
.h.tl { left: -7px; top: -7px; }
.h.tr { right: -7px; top: -7px; }
.h.bl { left: -7px; bottom: -7px; }
.h.br { right: -7px; bottom: -7px; }
.editcell { position: absolute; left: 337.500px; top: 330px; width: 140px; height: 50px; background: #c6e6f2; border: 2px solid #3b9460; border-right: 0; font-size: 27px; font-weight: 700; padding-left: 5px; display: flex; align-items: center; color: #222; line-height: 1; }
.editcell em { font-style: normal; }
.blue { color: #3a78c8; }
.red { color: #c8344f; }
.cursor { position: absolute; left: 354px; top: 198px; }

/* sheet tabs */
.sheettabs { height: 75px; flex: none; background: #e9e9eb; display: flex; align-items: flex-start; position: relative; z-index: 2; box-shadow: 0 -1px 0 #e0e0e0; }
.st-l { margin: 20px 0 0 67px; }
.st-r { margin: 20px 0 0 61px; }
.st-tab { margin-left: 114px; width: 133px; height: 66px; background: #fff; border-radius: 0 0 10px 10px; display: flex; justify-content: center; font-size: 28.500px; font-weight: 700; color: #333; padding-top: 9px; }
.st-tab span { height: 46px; border-bottom: 4px solid #1f7a46; line-height: 38px; }
.st-sep { margin: 17px 0 0 11px; height: 42px; background: #cfcfcf; }
.st-plus { margin: 21px 0 0 100px; }
.st-handle { margin: 5px 0 0 66px; font-size: 33px; color: #bababc; letter-spacing: -.3px; line-height: 62px; }

/* status */
.status { height: 52px; flex: none; background: #f8f8f8; border-top: 2px solid #d9d5d5; display: flex; align-items: center; font-size: 25.500px; color: #333; padding-left: 29px; white-space: nowrap; }
.s-mac { margin-left: 55px; }
.s-acc { margin-left: 42px; }
.s-acct { font-size: 25px; letter-spacing: .6px; }

/* taskbar */
.taskbar { flex: 1; background: linear-gradient(90deg, #dde9f3, #d9e6f4 45%, #d0dcf4); border-top: 2px solid #bfc5c9; border-bottom: 2px solid #20262c; display: flex; align-items: center; padding-left: 50px; }
.t-search { margin-left: 34px; width: 515px; height: 71px; border-radius: 36px; background: #f8f9fb; box-shadow: 0 1px 3px rgba(0,0,0,.18); display: flex; align-items: center; padding: 0 0 2px 25px; font-size: 29px; color: #7a7a7a; }
.t-search span { margin-left: 26px; }
.t-ball { margin-left: 218px; }
.t-folder { margin-left: 32px; }
.svg-o { font: 700 24px "Noto Sans", sans-serif; fill: #fff; text-anchor: middle; }
.svg-w { font: 700 20px "Noto Sans", sans-serif; fill: #fff; text-anchor: middle; }
.t-out { margin-left: 47px; }
.t-spot { margin-left: 49px; }
.t-chrome { margin-left: 45px; width: 58px; height: 60px; border-radius: 50%; flex: none; display: flex; align-items: center; justify-content: center; background: conic-gradient(from -75deg, #d93a2e 0 150deg, #f4c524 150deg 250deg, #3aa655 250deg 360deg); }
.t-chrome-c { width: 27px; height: 27px; border-radius: 50%; background: #4d86e0; box-shadow: 0 0 0 4px #fff; }
.t-word { margin-left: 46px; }
.t-xlbox { position: relative; margin-left: 38px; width: 90px; height: 90px; background: rgba(240,244,252,.75); border-radius: 8px; box-shadow: 0 1px 2px rgba(0,0,0,.15); display: flex; align-items: center; justify-content: center; }
.t-ind { position: absolute; left: 27px; bottom: 1px; width: 46px; height: 7px; border-radius: 4px; background: #6f6dc6; }
.t-obs { position: relative; margin-left: 32px; align-self: flex-start; padding-top: 28px; }
.t-ind2 { position: absolute; left: 27px; top: 96px; width: 13px; height: 6px; border-radius: 3px; background: #8a8d99; }
.t-last { margin-left: 29px; }

/* caption overlays */
.badge { position: absolute; left: 519px; top: 428px; width: 401px; height: 235px; background: #000; border-radius: 30px; z-index: 5; display: flex; align-items: center; }
.badge-t { width: 250px; margin-left: 39px; color: #fff; font-family: "Roboto", sans-serif; font-size: 111px; line-height: 1; transform: scaleX(.72); transform-origin: left center; white-space: nowrap; flex: none; -webkit-text-stroke: 1.500px #fff; margin-top: 2px; }
.baby { position: absolute; left: 249px; top: 60px; }
.banner { position: absolute; left: 214px; top: 1025px; width: 1012px; height: 509px; z-index: 6; }
.b-cyan, .b-red { position: absolute; inset: 0; }
.b-cyan { background: #22d3ec; clip-path: polygon(0 0, 885px 0, 949px 62.500px, 63px 446px, 0 382px); }
.b-red { background: #fe2c55; clip-path: polygon(949px 62.500px, 1012px 125px, 1012px 509px, 125px 509px, 63px 446px); }
.b-black { position: absolute; left: 63px; top: 62.500px; width: 886px; height: 383.500px; background: #000; display: flex; align-items: center; justify-content: center; color: #fff; font-family: "Liberation Sans", Arial, sans-serif; font-weight: 700; font-size: 148px; letter-spacing: -3.500px; line-height: 1; white-space: nowrap; -webkit-text-stroke: 1.500px #fff; }
.b-black span { margin-left: -6px; margin-top: 4px; }
```
